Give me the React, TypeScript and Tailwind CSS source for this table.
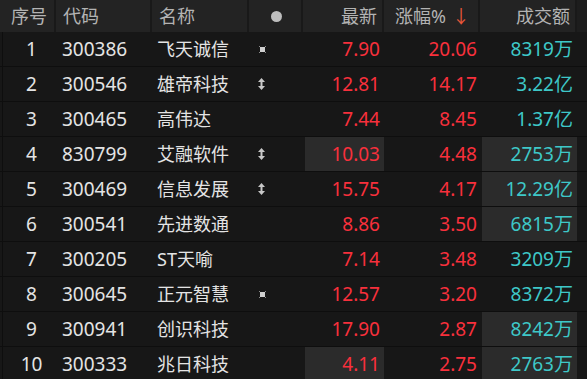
import React from "react";

type Row = {
  no: number;
  code: string;
  name: string;
  mark: "none" | "dot" | "arrow";
  price: string;
  pct: string;
  amount: string;
  hiPrice?: boolean;
  hiAmount?: boolean;
};

const rows: Row[] = [
  { no: 1, code: "300386", name: "飞天诚信", mark: "dot", price: "7.90", pct: "20.06", amount: "8319万" },
  { no: 2, code: "300546", name: "雄帝科技", mark: "arrow", price: "12.81", pct: "14.17", amount: "3.22亿" },
  { no: 3, code: "300465", name: "高伟达", mark: "none", price: "7.44", pct: "8.45", amount: "1.37亿" },
  { no: 4, code: "830799", name: "艾融软件", mark: "arrow", price: "10.03", pct: "4.48", amount: "2753万", hiPrice: true, hiAmount: true },
  { no: 5, code: "300469", name: "信息发展", mark: "arrow", price: "15.75", pct: "4.17", amount: "12.29亿", hiAmount: true },
  { no: 6, code: "300541", name: "先进数通", mark: "none", price: "8.86", pct: "3.50", amount: "6815万", hiAmount: true },
  { no: 7, code: "300205", name: "ST天喻", mark: "none", price: "7.14", pct: "3.48", amount: "3209万" },
  { no: 8, code: "300645", name: "正元智慧", mark: "dot", price: "12.57", pct: "3.20", amount: "8372万" },
  { no: 9, code: "300941", name: "创识科技", mark: "none", price: "17.90", pct: "2.87", amount: "8242万", hiAmount: true },
  { no: 10, code: "300333", name: "兆日科技", mark: "none", price: "4.11", pct: "2.75", amount: "2763万", hiPrice: true, hiAmount: true },
];

const cols = "grid grid-cols-[56px_96px_97px_54px_81px_96px_97px_10px]";

function DotMark() {
  return (
    <svg width="9" height="9" viewBox="0 0 9 9">
      <rect x="2" y="2" width="5" height="5" fill="#cfcfcf" />
      <rect x="1" y="1" width="1" height="1" fill="#8a8a8a" />
      <rect x="7" y="1" width="1" height="1" fill="#8a8a8a" />
      <rect x="1" y="7" width="1" height="1" fill="#8a8a8a" />
      <rect x="7" y="7" width="1" height="1" fill="#8a8a8a" />
    </svg>
  );
}

function ArrowMark() {
  return (
    <svg width="7" height="12" viewBox="0 0 7 12">
      <path d="M3.5 0 L7 4 L0 4 Z" fill="#c8c8c8" />
      <rect x="2.5" y="4" width="2" height="4" fill="#c8c8c8" />
      <path d="M3.5 12 L7 8 L0 8 Z" fill="#c8c8c8" />
    </svg>
  );
}

export default function App() {
  return (
    <div
      className="w-[587px] h-[379px] overflow-hidden bg-[#171717] text-[18px] leading-none"
      style={{ fontFamily: "'Noto Sans', 'Noto Sans CJK SC', sans-serif" }}
    >
      <div className={`${cols} h-[32px] bg-[#232323] text-[#b3b3b3]`}>
        <div className="flex items-center justify-center pl-1 border-r-2 border-[#191919]">序号</div>
        <div className="flex items-center pl-[7px] border-r-2 border-[#191919]">代码</div>
        <div className="flex items-center pl-[7px] border-r-2 border-[#191919]">名称</div>
        <div className="flex items-center justify-center pl-[2px] border-r-2 border-[#191919]">
          <span className="w-[11px] h-[11px] rounded-full bg-[#bdbdbd]" />
        </div>
        <div className="flex items-center justify-end pr-[5px] border-r-2 border-[#191919]">最新</div>
        <div className="flex items-center justify-end pr-[8px] gap-[6px] border-r-2 border-[#191919]">
          <span>涨幅%</span>
          <span className="text-[#e9573a]">↓</span>
        </div>
        <div className="flex items-center justify-end pr-[5px] border-r-2 border-[#191919]">成交额</div>
        <div className="bg-[#1d1d1d]" />
      </div>

      {rows.map((r) => (
        <div key={r.no} className={`${cols} h-[35px] border-b border-[#0e0e0e] text-[19px]`}>
          <div className="flex items-center justify-center pl-[4px] text-[#e4e4e4] border-l border-[#0e0e0e] ml-[2px]">
            {r.no}
          </div>
          <div className="flex items-center pl-[6px] text-[#e4e4e4]">{r.code}</div>
          <div className="flex items-center pl-[5px] text-[#e4e4e4] text-[18px]">{r.name}</div>
          <div className="flex items-center pl-[9px]">
            {r.mark === "dot" ? <DotMark /> : r.mark === "arrow" ? <ArrowMark /> : null}
          </div>
          <div className={`flex items-center justify-end pr-[4px] ml-[2px] text-[#f8303c] ${r.hiPrice ? "bg-[#2b2b2b]" : ""}`}>
            {r.price}
          </div>
          <div className="flex items-center justify-end pr-[3px] text-[#f8303c]">{r.pct}</div>
          <div className={`flex items-center justify-end pr-[4px] ml-[2px] text-[#3ec8c8] ${r.hiAmount ? "bg-[#2b2b2b]" : ""}`}>
            {r.amount}
          </div>
          <div />
        </div>
      ))}
    </div>
  );
}
